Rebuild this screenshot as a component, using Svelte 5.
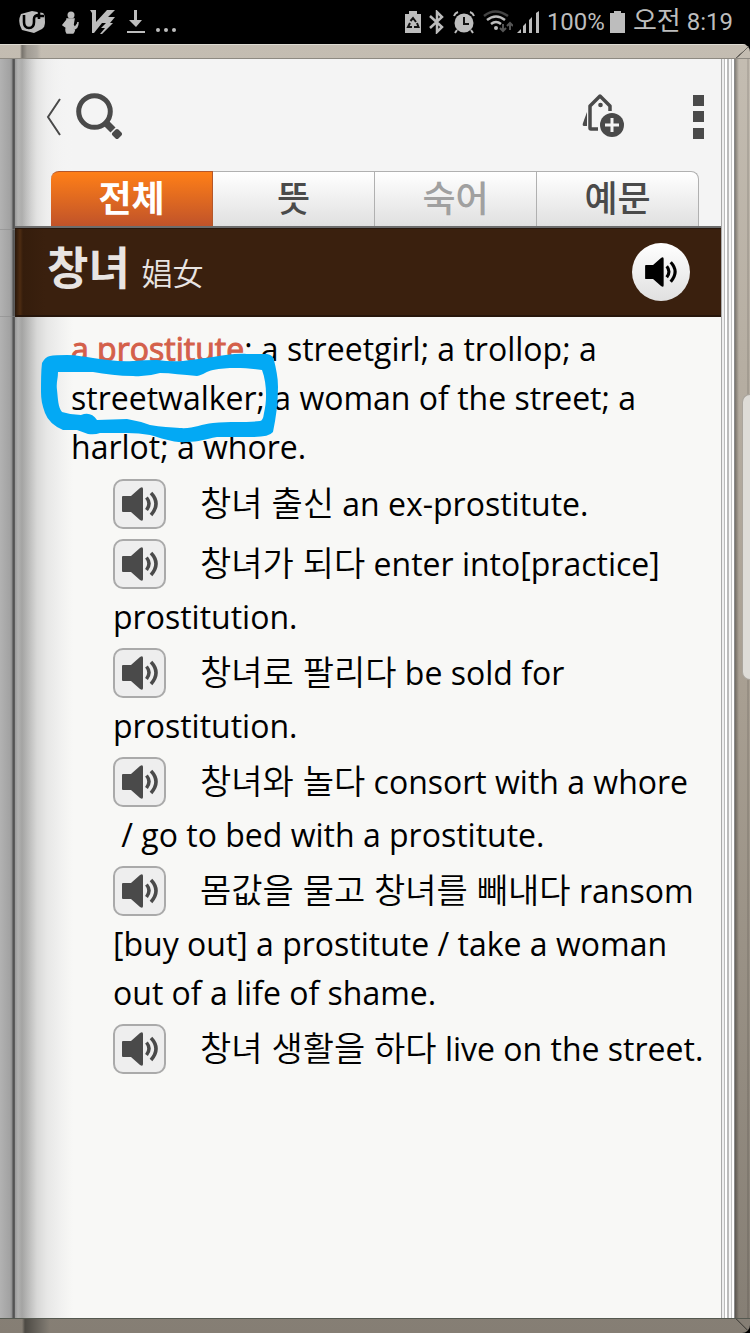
<script>
  const tabs = [
    { label: '전체', state: 'on' },
    { label: '뜻', state: '' },
    { label: '숙어', state: 'off' },
    { label: '예문', state: '' }
  ];

  const examples = [
    { ko: '창녀 출신', en: 'an ex-prostitute.' },
    { ko: '창녀가 되다', en: 'enter into[practice] prostitution.' },
    { ko: '창녀로 팔리다', en: 'be sold for prostitution.' },
    { ko: '창녀와 놀다', en: 'consort with a whore\n / go to bed with a prostitute.' },
    {
      ko: '몸값을 물고 창녀를 빼내다',
      en: 'ransom [buy out] a prostitute / take a woman out of a life of shame.'
    },
    { ko: '창녀 생활을 하다', en: 'live on the street.' }
  ];
</script>

{#snippet speaker()}
  <svg class="speaker" viewBox="0 0 36 34" aria-hidden="true">
    <path d="M1 9h8L18 1q3-2 3 1v30q0 3-3 1L9 25H1q-1 0-1-1V10q0-1 1-1z" fill="currentColor" />
    <path d="M24.500 10.500q5 6 0 12.500M29 6q10 10.500 0 22" fill="none" stroke="currentColor" stroke-width="3.500" />
  </svg>
{/snippet}

<div class="screen">
  <header class="status">
    <div class="notices">
      <svg width="26" height="24" viewBox="0 0 26 24">
        <path d="M2 4 13 1 24 3q2 1 2 9 0 5-3 7l-8 4L3 20Q-2 12 2 4z" fill="#bdbdbd" />
        <path d="M5 5v7q0 6 5 6t5-6V9q0-4 5-4M20 2v7M17 6h8" fill="none" stroke="#000" stroke-width="2.600" />
      </svg>
      <svg class="person" width="17" height="23" viewBox="0 0 17 23">
        <circle cx="9" cy="4" r="3.500" fill="#bdbdbd" />
        <path d="M5 8h7l-1 6 2 3q-1 4-2 5H5q-2-3 0-7zM5 9 1 14l4 3M11 18q5 0 5-7" fill="#bdbdbd" stroke="#bdbdbd" stroke-width="1.500" />
      </svg>
      <svg width="26" height="24" viewBox="0 0 26 24">
        <path d="M0 0h6v12L17 0h8l-7 7h7l-5 6h3L12 24h-2l5-6h-4l5-5h-4L4 23H2V3z" fill="#bdbdbd" />
      </svg>
      <svg width="18" height="24" viewBox="0 0 18 24">
        <path d="M7 0h3v10h5l-6 7-7-7h5zM0 21h18v2H0z" fill="#bdbdbd" />
      </svg>
      <svg width="20" height="24" viewBox="0 0 20 24">
        <g fill="#bdbdbd"><circle cx="2" cy="20" r="2" /><circle cx="10" cy="20" r="2" /><circle cx="18" cy="20" r="2" /></g>
      </svg>
    </div>
    <div class="system">
      <svg width="16" height="22" viewBox="0 0 16 22">
        <path d="M0 3h4V0h8v3h4v19H0z" fill="#bdbdbd" />
        <path d="m5.500 10 2.500-3 3 4M12 12l1.500 4H9M7 16H3l2-4" fill="none" stroke="#111" stroke-width="2" />
      </svg>
      <svg width="16" height="24" viewBox="0 0 16 24">
        <path d="m1 6 12 11-5 5V2l5 5L1 18" fill="none" stroke="#bdbdbd" stroke-width="2.500" />
      </svg>
      <svg width="22" height="23" viewBox="0 0 22 23">
        <circle cx="11" cy="12" r="9.500" fill="#bdbdbd" />
        <path d="M1 5q1-3 4-4M21 5q-1-3-4-4M4 19l-2 3M18 19l2 3" stroke="#bdbdbd" stroke-width="2" fill="none" />
        <path d="M11 6v7h5" stroke="#111" stroke-width="2" fill="none" />
      </svg>
      <svg width="30" height="24" viewBox="0 0 30 24" fill="none" stroke-width="2.500">
        <path d="M1 6q11-9 24 0" stroke="#444" />
        <path d="M4 10q9-7 18 0M8 14q5-4 10 0" stroke="#bdbdbd" />
        <circle cx="13" cy="18" r="2" fill="#bdbdbd" />
        <path d="M20 14v6m-3-2 3 3 3-3M27 20v-6m-3 2 3-3 3 3" stroke="#555" stroke-width="2" />
      </svg>
      <svg class="signal" width="22" height="22" viewBox="0 0 22 22">
        <path d="M0 22l4-4v4zM6 15l3-3v10H6zM12 9l3-3v16h-3zM19 2l3-2v22h-3z" fill="#bdbdbd" />
      </svg>
      <span>100%</span>
      <svg class="battery" width="15" height="22" viewBox="0 0 15 22"><path d="M0 2h4V0h7v2h4v20H0z" fill="#bdbdbd" /></svg>
      <span><span class="ampm">오전</span> 8:19</span>
    </div>
  </header>

  <div class="book">
    <div class="cover"></div>
    <div class="spread">
      <div class="left-page"></div>
      <main class="page">
        <div class="toolbar">
          <button class="plain" aria-label="뒤로">
            <svg width="16" height="38" viewBox="0 0 16 38"><path d="M14 1 2 19l12 18" fill="none" stroke="#4a4a4a" stroke-width="2" /></svg>
          </button>
          <button class="plain find" aria-label="검색">
            <svg width="46" height="48" viewBox="0 0 46 48" fill="none" stroke="#4a4a4a">
              <circle cx="18.500" cy="18.500" r="15.800" stroke-width="5" />
              <path d="m29 29 8 8" stroke-width="7" />
              <path d="m41 38 3 3-3 3-3-3z" fill="#4a4a4a" stroke-width="4" stroke-linejoin="round" />
            </svg>
          </button>
          <button class="plain tag" aria-label="단어장 추가">
            <svg width="43" height="46" viewBox="0 0 43 46">
              <path d="M5 18v14H2q-2 0-1-3z" fill="#4a4a4a" />
              <path d="M16 35H9q-1 0-1-1V12L18 2l10 10v5" fill="none" stroke="#4a4a4a" stroke-width="3.500" stroke-linejoin="round" />
              <circle cx="18.500" cy="11" r="2.300" fill="#4a4a4a" />
              <circle cx="30" cy="31" r="12" fill="#4a4a4a" />
              <path d="M30 24v14M23 31h14" stroke="#f4f4f4" stroke-width="3" />
            </svg>
          </button>
          <button class="plain" aria-label="메뉴">
            <svg width="12" height="44" viewBox="0 0 12 44"><path d="M0 0h11v11H0zM0 16h11v11H0zM0 33h11v11H0z" fill="#4a4a4a" /></svg>
          </button>
        </div>

        <nav class="tabs">
          {#each tabs as tab}
            <button class="tab {tab.state}">{tab.label}</button>
          {/each}
        </nav>

        <div class="word">
          <h1>창녀 <small>娼女</small></h1>
          <button class="say" aria-label="발음 듣기">{@render speaker()}</button>
        </div>

        <section class="entry">
          <p>
            <strong>a prostitute</strong>; a streetgirl; a trollop; a streetwalker; a woman of the street; a harlot; a whore.
          </p>
          <ul>
            {#each examples as { ko, en }}
              <li><button class="play" aria-label="예문 듣기">{@render speaker()}</button><span class="ko" lang="ko">{ko}</span> {en}</li>
            {/each}
          </ul>
          <svg class="marker" width="240" height="94" viewBox="0 0 240 94" aria-hidden="true">
            <path
              fill="#03a9f4"
              fill-rule="evenodd"
              d="M9 5Q14 4 26 4C36 4 44 6 52 7C66 9 80 11 92 10Q104 9 116 9Q130 11 142 10C152 9 162 7 172 6C184 4 196 2 206 3L226 3Q232 4 233 9C235 18 237 26 237 36C237 52 235 66 232 81Q228 86 212 86L176 86C164 88 158 91 146 91C132 92 120 87 109 84Q98 82 86 82L59 82Q54 84 47 83L36 79L22 79Q8 73 4 62C1 54 0 48 0 41C0 30 0 20 1 12Q4 6 9 5ZM17 21C17 28 15 32 16 39C17 48 17 56 21 61Q30 64 40 64Q50 60 56 69L86 68Q98 70 109 74C120 76 130 76 139 77C152 78 160 73 172 72C188 70 204 72 219 70Q222 70 223 62C226 50 226 32 221 19C206 17 188 16 172 19C166 20 162 24 156 25C142 24 130 22 119 22Q106 26 92 25C78 25 64 23 52 21Z"
            />
          </svg>
        </section>
      </main>
      <div class="leaves"></div>
      <div class="edge"><div class="thumb"></div></div>
    </div>
    <div class="cover bottom"></div>
  </div>
</div>

<style>
  :global(body) {
    margin: 0;
    background: #000;
  }
  .screen {
    min-height: 100vh;
    display: flex;
    flex-direction: column;
    font-family: 'Open Sans', 'Noto Sans CJK KR', sans-serif;
    color: #000;
  }
  svg {
    display: block;
    flex: none;
  }
  button {
    font: inherit;
    color: inherit;
    padding: 0;
    border: 0;
    margin: 0;
    cursor: pointer;
  }
  .status {
    height: 44px;
    padding: 0 17px 0 19px;
    display: flex;
    align-items: center;
    justify-content: space-between;
    background: #000;
    color: #bdbdbd;
    font: 24px/44px Roboto, 'Noto Sans CJK KR', sans-serif;
  }
  .ampm {
    font-size: 26px;
    line-height: 24px;
  }
  .notices,
  .system {
    display: flex;
    align-items: center;
    white-space: nowrap;
  }
  .notices {
    gap: 11px;
  }
  .person {
    margin-left: 6px;
  }
  .system {
    gap: 8px;
  }
  .signal {
    margin-left: -4px;
  }
  .battery {
    margin-left: -3px;
  }
  .book {
    flex: 1;
    display: flex;
    flex-direction: column;
    overflow: hidden;
    border-radius: 0 8px 8px 0;
    background: linear-gradient(#c4bdb2, #a89f92 50%, #857e74);
  }
  .cover {
    height: 14px;
    border-top: 1px solid #dedbd3;
    box-sizing: border-box;
    background:
      linear-gradient(to bottom right, transparent 48%, #6a665f 49% 53%, transparent 54%) right / 14px 100% no-repeat,
      linear-gradient(90deg, transparent 20px, #77736c 22px, #a09b93 27px, #b0aba3 37px, transparent 41px);
  }
  .cover.bottom {
    height: 15px;
    border-top-color: #555950;
    background:
      linear-gradient(to top right, transparent 48%, #4d4a44 49% 53%, transparent 54%) right / 14px 100% no-repeat,
      linear-gradient(90deg, transparent 22px, #4d4a44 25px, #77726a 44px, transparent 50px);
  }
  .spread {
    flex: 1;
    display: flex;
    border-top: 1px solid #8e8a82;
  }
  .left-page {
    width: 15px;
    background:
      linear-gradient(transparent 170px, #8888 170px 171px, transparent 171px 257px, #8888 257px 258px, transparent 258px),
      linear-gradient(90deg, #b2b2b2, #a2a2a2 10px, #8e8e8e 12px, #505050 13px, #606060 15px);
  }
  .page {
    flex: 1;
    min-width: 0;
    background: linear-gradient(90deg, #999 0, #b0b0af 3px, #a4a4a3 7px, #b9b9b8 13px, #d8d8d7 22px, #e7e7e6 32px, #f1f1f0 46px, #f8f8f6 58px);
  }
  .toolbar {
    height: 112px;
    padding: 3px 16px 0 31px;
    display: flex;
    align-items: center;
    box-sizing: border-box;
    background: linear-gradient(90deg, transparent, #f4f4f4 58px);
  }
  .plain {
    background: none;
  }
  .find {
    margin-left: 14px;
  }
  .tag {
    margin-left: auto;
    margin-right: 68px;
  }
  .tabs {
    display: flex;
    height: 55px;
    padding: 0 22px 0 36px;
    border-bottom: 2px solid #6c6c6c;
    background: linear-gradient(90deg, transparent, #f4f4f4 58px);
  }
  .tab {
    flex: 1;
    border: 1px solid #b0b0b0;
    border-width: 1px 1px 0 0;
    background: linear-gradient(#fff, #e0e0e0);
    color: #4a4a4a;
    font-size: 36px;
    font-weight: 500;
    line-height: 52px;
  }
  .tab.on {
    border-color: #b4572a;
    border-radius: 8px 0 0 0;
    background: linear-gradient(#ff7f17, #c0532a);
    color: #fff;
    font-weight: 700;
  }
  .tab.off {
    color: #a0a0a0;
  }
  .tab:last-child {
    border-radius: 0 8px 0 0;
  }
  .word {
    height: 89px;
    padding: 0 31px 0 32px;
    display: flex;
    align-items: center;
    justify-content: space-between;
    box-sizing: border-box;
    border: 2px solid #27160b;
    border-width: 1px 0 2px;
    background: linear-gradient(90deg, #29170a, #4d2c12 5px, #351d0c 8px, #3a200e 30px);
  }
  h1 {
    margin: 0 0 4px;
    font-size: 45px;
    line-height: 60px;
    font-weight: 700;
    color: #e8e4e2;
  }
  small {
    font-size: 31px;
    font-weight: 350;
  }
  .say {
    width: 58px;
    height: 58px;
    border-radius: 50%;
    display: grid;
    place-items: center;
    background: linear-gradient(#fff, #e0e0e0);
    color: #000;
  }
  .say .speaker {
    width: 32px;
    height: 30px;
  }
  .entry {
    position: relative;
    padding: 7px 8px 0 56px;
    font-size: 32px;
    line-height: 49px;
  }
  p,
  ul {
    margin: 0;
    padding: 0;
  }
  p {
    padding-right: 40px;
  }
  strong {
    font-weight: 400;
    color: #d4604a;
    -webkit-text-stroke: 1px #d4604a;
  }
  ul {
    margin-top: 1px;
    padding-left: 42px;
    list-style: none;
  }
  li {
    white-space: pre-wrap;
  }
  .ko {
    font-size: 34px;
    font-weight: 350;
    line-height: 34px;
  }
  .play {
    display: inline-grid;
    place-items: center;
    width: 53px;
    height: 50px;
    margin: 7px 34px 3px 0;
    vertical-align: -5px;
    box-sizing: border-box;
    border: 2px solid #aaa;
    border-radius: 10px;
    background: #eee;
    color: #4a4a4a;
  }
  .play .speaker {
    width: 36px;
    height: 34px;
  }
  .marker {
    position: absolute;
    left: 26px;
    top: 34px;
    pointer-events: none;
  }
  .leaves {
    width: 14px;
    background: linear-gradient(90deg, #a9a9a9 0 1px, #eee 1px 3px, #bbb 3px 4px, #fff 4px 6px, #bbb 6px 8px, #f6f6f6 8px 10px, #c4c4c4 10px 11px, #fff 11px 13px, #888 13px);
  }
  .edge {
    position: relative;
    width: 15px;
    background: linear-gradient(90deg, #0005, transparent 4px 12px, #0003 13px, transparent 14px);
  }
  .thumb {
    position: absolute;
    right: 0;
    top: 335px;
    width: 8px;
    height: 286px;
    box-sizing: border-box;
    border: 1px solid #aaa59d;
    border-right: 0;
    border-radius: 8px 0 0 8px;
    background: #dedcd7;
  }
</style>
